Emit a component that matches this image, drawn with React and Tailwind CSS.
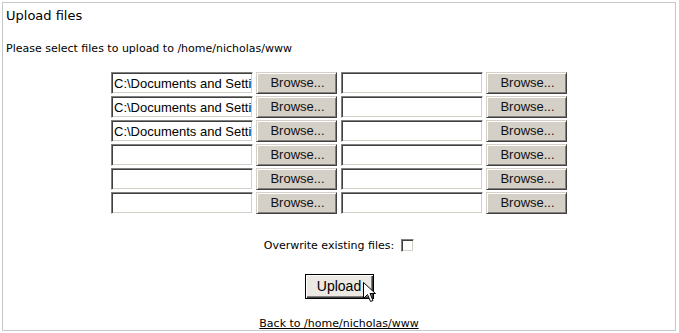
import React from 'react';

const verdana = { fontFamily: '"DejaVu Sans", Verdana, sans-serif' };

function FileInput({ value }) {
  return (
    <input
      type="text"
      readOnly
      value={value}
      className="block box-border w-[142px] h-[22px] min-h-0 p-0 pl-[2px] border border-t-[#808080] border-l-[#808080] border-b-white border-r-white bg-white shadow-[inset_1px_1px_0_#404040,inset_-1px_-1px_0_#d4d0c8] text-[13px] leading-[16px] text-black font-['Liberation_Sans',Arial,sans-serif] outline-none"
    />
  );
}

function BrowseButton() {
  return (
    <div className="w-[81px] h-[22px] border border-t-[#d4d0c8] border-l-[#d4d0c8] border-b-[#404040] border-r-[#404040] bg-[#d4d0c8] shadow-[inset_1px_1px_0_#ffffff,inset_-1px_-1px_0_#808080] flex items-center justify-center pl-[2px] text-[13px] text-[#111] font-['Liberation_Sans',Arial,sans-serif]">
      Browse...
    </div>
  );
}

const rows = [
  ['C:\\Documents and Settings\\nicholas\\Desktop\\a.txt', ''],
  ['C:\\Documents and Settings\\nicholas\\Desktop\\b.txt', ''],
  ['C:\\Documents and Settings\\nicholas\\Desktop\\c.txt', ''],
  ['', ''],
  ['', ''],
  ['', ''],
];

export default function App() {
  return (
    <div className="w-[679px] h-[333px] bg-white p-[2px]" style={verdana}>
      <div className="w-[674px] h-[329px] border border-[#c8c8c8] flex flex-col">
        <div className="pl-[3px] pt-[5px] text-[13px] leading-[16px] text-black">Upload files</div>
        <div className="pl-[3px] mt-[18px] text-[11px] leading-[13px] text-black">
          Please select files to upload to /home/nicholas/www
        </div>

        <div className="mt-[17px] flex flex-col gap-[2px] items-center">
          {rows.map((r, i) => (
            <div key={i} className="flex h-[22px] items-start">
              <FileInput value={r[0]} />
              <div className="ml-[3px]"><BrowseButton /></div>
              <div className="ml-[4px]"><FileInput value={r[1]} /></div>
              <div className="ml-[3px]"><BrowseButton /></div>
            </div>
          ))}
        </div>

        <div className="mt-[25px] flex items-center justify-center gap-[7px] text-[11px] leading-[13px] text-black">
          <span>Overwrite existing files:</span>
          <span className="w-[13px] h-[13px] border border-t-[#808080] border-l-[#808080] border-b-white border-r-white bg-white shadow-[inset_1px_1px_0_#404040,inset_-1px_-1px_0_#d4d0c8]"></span>
        </div>

        <div className="mt-[22px] flex justify-center">
          <div className="relative">
            <div className="w-[69px] h-[25px] border border-black bg-[#ece9e4] shadow-[inset_1px_1px_0_#ffffff,inset_-1px_-1px_0_#404040,inset_-2px_-2px_0_#808080] flex items-center justify-center text-[14px] text-black font-['Liberation_Sans',Arial,sans-serif]">
              Upload
            </div>
            <svg className="absolute left-[58px] top-[8px]" width="16" height="24" viewBox="0 0 16 24">
              <path d="M0.5 0.5 L0.5 16.5 L4.5 12.5 L7.5 19.5 L10 18.5 L7 11.5 L12.5 11.5 Z" fill="white" stroke="black" strokeWidth="1" />
            </svg>
          </div>
        </div>

        <div className="mt-[18px] flex justify-center">
          <span className="text-[11px] leading-[13px] text-black underline">Back to /home/nicholas/www</span>
        </div>
      </div>
    </div>
  );
}
